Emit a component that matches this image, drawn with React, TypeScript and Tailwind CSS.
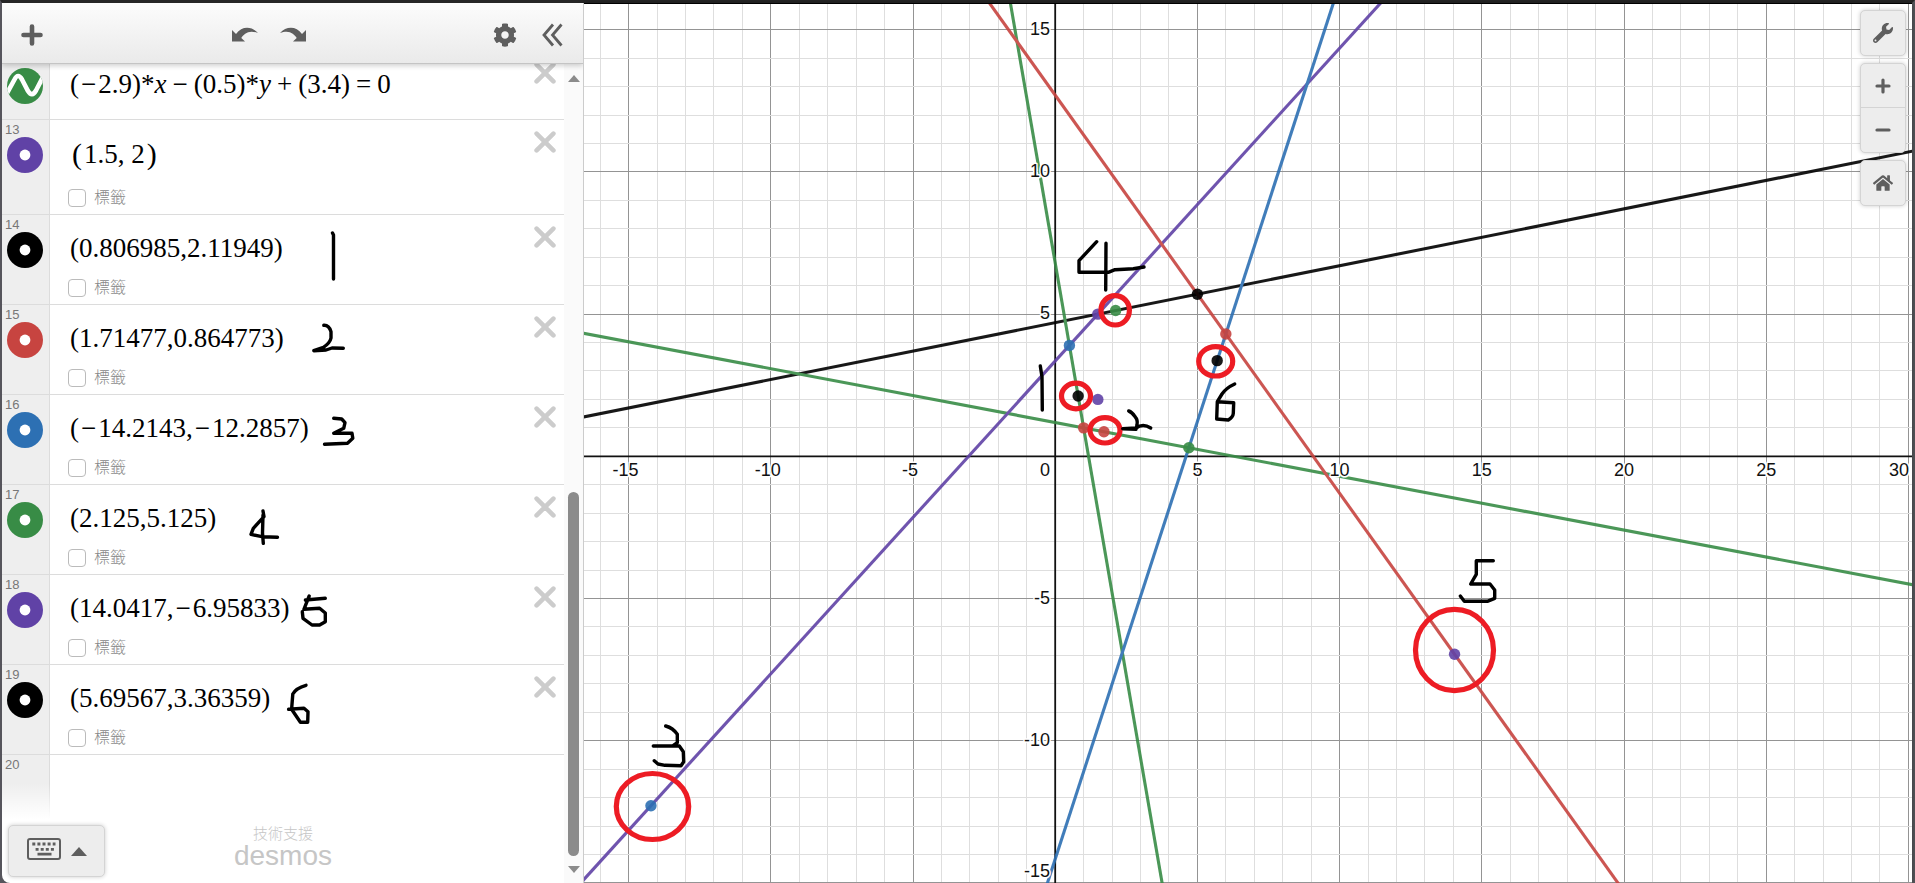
import type { ReactNode } from "react";
import { FaCog, FaHome, FaWrench } from "react-icons/fa";

const RED = "#c74440";
const BLUE = "#2d70b3";
const GREEN = "#388c46";
const PURPLE = "#6042a6";
const BLACK = "#000000";

/* ---------- Expression list ---------- */

const Minus = () => <span className="px-[2px]">−</span>;
const Op = ({ children }: { children: ReactNode }) => (
  <span className="px-[6px]">{children}</span>
);

type Point = { id: number; color: string; math: ReactNode };

const points: Point[] = [
  { id: 14, color: BLACK, math: "(0.806985,2.11949)" },
  { id: 15, color: RED, math: "(1.71477,0.864773)" },
  { id: 16, color: BLUE, math: <>(<Minus />14.2143,<Minus />12.2857)</> },
  { id: 17, color: GREEN, math: "(2.125,5.125)" },
  { id: 18, color: PURPLE, math: <>(14.0417,<Minus />6.95833)</> },
  { id: 19, color: BLACK, math: "(5.69567,3.36359)" },
];

function DeleteButton() {
  return (
    <button type="button" aria-label="Delete" className="mt-[11px] mr-2 h-[22px] w-[22px] shrink-0">
      <svg viewBox="0 0 22 22" className="h-full w-full" stroke="#cccccc" strokeWidth="4.6" strokeLinecap="round">
        <path d="M2.6 2.6 19.4 19.4M19.4 2.6 2.6 19.4" />
      </svg>
    </button>
  );
}

function PointIcon({ color }: { color: string }) {
  return (
    <svg viewBox="0 0 36 36" className="h-9 w-9">
      <circle cx="18" cy="18" r="18" fill={color} />
      <circle cx="18" cy="18" r="5.4" fill="#fff" />
    </svg>
  );
}

function CurveIcon() {
  return (
    <svg viewBox="0 0 36 36" className="h-9 w-9">
      <clipPath id="disc">
        <circle cx="18" cy="18" r="18" />
      </clipPath>
      <g clipPath="url(#disc)">
        <rect width="36" height="36" fill={GREEN} />
        <path d="M-2 29L7.500 11.500Q11 4.500 15 11.500L21 23Q25 29.500 29 22.500L38 5" fill="none" stroke="#fff" strokeWidth="4.600" />
      </g>
    </svg>
  );
}

function Gutter({ id, children }: { id?: number; children?: ReactNode }) {
  return (
    <div className="w-12 shrink-0 border-r border-[#dcdcdc] bg-[#eeeeee] pt-[2px]">
      <div className="h-[15px] pl-[3px] text-[13px] leading-[15px] text-[#777777]">{id}</div>
      {children && (
        <button type="button" aria-label="Toggle" className="ml-[5px] block h-9 w-9">
          {children}
        </button>
      )}
    </div>
  );
}

function LabelToggle({ id }: { id: number }) {
  return (
    <label htmlFor={`label-${id}`} className="-ml-[2px] flex w-fit items-center gap-2 text-base leading-[18px] font-light text-[#888888]">
      <input
        id={`label-${id}`}
        type="checkbox"
        className="h-[18px] w-[18px] appearance-none rounded-[4px] border border-[#bbbbbb] bg-white"
      />
      標籤
    </label>
  );
}

const mathClass = "font-['Liberation_Serif',serif] text-[27px] leading-8 whitespace-nowrap text-black";

function PointRow({ id, color, math }: Point) {
  return (
    <li className="flex h-[90px] border-b border-[#dcdcdc]">
      <Gutter id={id}>
        <PointIcon color={color} />
      </Gutter>
      <div className="flex flex-1 flex-col gap-[15px] pt-[17px] pl-5">
        <div className={mathClass}>{math}</div>
        <LabelToggle id={id} />
      </div>
      <DeleteButton />
    </li>
  );
}

function Header() {
  return (
    <header className="relative z-10 grid h-[61px] shrink-0 grid-cols-[214px_1fr_auto] items-center border-b border-[#c4c4c4] bg-linear-to-b from-[#fcfcfc] to-[#eaeaea] pt-[3px] pr-5 pl-4 text-[#5e5e5e] shadow-[0_2px_5px_rgba(0,0,0,0.18)]">
      <button type="button" aria-label="Add item" className="ml-[2px] justify-self-start">
        <svg viewBox="0 0 24 24" className="block h-6 w-6" stroke="currentColor" strokeWidth="4.600" strokeLinecap="round">
          <path d="M12 3.500V20.500M3.500 12H20.500" />
        </svg>
      </button>
      <div className="flex items-center gap-[22px]">
        <button type="button" aria-label="Undo">
          <svg viewBox="0 0 26 16" className="mb-[2px] block h-4 w-[26px]" fill="currentColor">
            <path d="M0 4V15.500H13L9.300 12C12 7.500 17 3.500 26 7C20 .3 10-.5 4 8Z" />
          </svg>
        </button>
        <button type="button" aria-label="Redo">
          <svg viewBox="0 0 26 16" className="mb-[2px] block h-4 w-[26px]" fill="currentColor">
            <path d="M26 4V15.500H13L16.700 12C14 7.500 9 3.500 0 7C6 .3 16-.5 22 8Z" />
          </svg>
        </button>
      </div>
      <div className="flex items-center gap-6">
        <button type="button" aria-label="Settings">
          <FaCog className="block h-6 w-6" />
        </button>
        <button type="button" aria-label="Hide list">
          <svg viewBox="0 0 22 24" className="block h-6 w-[22px]" fill="none" stroke="currentColor" strokeWidth="2.800">
            <path d="M12 1.500 3 12 12 22.500M20.500 1.500 11.500 12 20.500 22.500" />
          </svg>
        </button>
      </div>
    </header>
  );
}

function KeyboardButton() {
  return (
    <button
      type="button"
      aria-label="Keyboard"
      className="ml-[6px] flex h-[52px] w-[97px] items-center justify-center gap-[10px] justify-self-start rounded-[5px] border border-[#d4d4d4] bg-[#ededed] shadow-[0_0_4px_rgba(0,0,0,0.2)]"
    >
      <svg viewBox="0 0 34 22" className="mb-1 h-[22px] w-[34px]">
        <rect x="1" y="1" width="32" height="20" rx="2" fill="none" stroke="#5e5e5e" strokeWidth="2" />
        <path d="M5.300 6H28.500M8.600 11.300H27" stroke="#5e5e5e" strokeWidth="2.800" strokeDasharray="3 2.100" />
        <path d="M10.500 16.200H24.500" stroke="#5e5e5e" strokeWidth="2.800" />
      </svg>
      <svg viewBox="0 0 16 9" className="h-[9px] w-4" fill="#5e5e5e">
        <path d="M8 0 16 9H0Z" />
      </svg>
    </button>
  );
}

function ScrollTrack() {
  return (
    <div className="flex w-[19px] shrink-0 flex-col items-center bg-[#fafafa] pt-[11px] pb-[10px]">
      <svg viewBox="0 0 12 7" className="h-[7px] w-3" fill="#8b8b8b">
        <path d="M6 0 12 7H0Z" />
      </svg>
      <div className="flex-[53]" />
      <div className="w-[11px] flex-[47] rounded-full bg-[#8b8b8b]" />
      <svg viewBox="0 0 12 7" className="mt-[10px] h-[7px] w-3" fill="#8b8b8b">
        <path d="M0 0H12L6 7Z" />
      </svg>
    </div>
  );
}

function Sidebar() {
  return (
    <aside className="relative z-10 flex w-[582px] shrink-0 flex-col overflow-hidden rounded-bl-lg border-r border-[#cccccc] bg-white">
      <Header />
      <div className="flex min-h-0 flex-1">
        <div className="flex min-w-0 flex-1 flex-col overflow-hidden">
          <ol className="-mt-[13px] flex min-h-0 flex-1 flex-col">
            <li className="flex h-[69px] shrink-0 border-b border-[#dcdcdc]">
              <Gutter>
                <CurveIcon />
              </Gutter>
              <div className={`flex-1 pt-[17px] pl-5 ${mathClass}`}>
                (<Minus />2.9)*<i>x</i>
                <Op>−</Op>(0.5)*<i>y</i>
                <Op>+</Op>(3.4)<Op>=</Op>0
              </div>
              <DeleteButton />
            </li>
            <li className="flex h-[95px] shrink-0 border-b border-[#dcdcdc]">
              <Gutter id={13}>
                <PointIcon color={PURPLE} />
              </Gutter>
              <div className="flex flex-1 flex-col gap-[19px] pt-[18px] pl-5">
                <div className={`flex items-center gap-[2px] pl-[2px] ${mathClass}`}>
                  <span className="text-[30px]">(</span>
                  <span>1.5, 2</span>
                  <span className="text-[30px]">)</span>
                </div>
                <LabelToggle id={13} />
              </div>
              <DeleteButton />
            </li>
            {points.map((p) => (
              <PointRow key={p.id} {...p} />
            ))}
            <li className="relative flex min-h-0 flex-1">
              <Gutter id={20} />
              <div className="absolute inset-x-0 bottom-0 h-9 bg-linear-to-b from-transparent to-white" />
            </li>
          </ol>
          <footer className="grid h-16 shrink-0 grid-cols-[1fr_auto_1fr] items-center">
            <KeyboardButton />
            <div className="flex flex-col items-center pb-2 text-[#c6c6c6]">
              <span className="text-[15px] leading-[18px] font-light">技術支援</span>
              <span className="text-[28px] leading-[26px]">desmos</span>
            </div>
          </footer>
        </div>
        <ScrollTrack />
      </div>
    </aside>
  );
}

/* ---------- Graph ---------- */

const UNIT = 28.44;
const gx = (x: number) => 1055.2 + x * UNIT;
const gy = (y: number) => 456.3 - y * UNIT;
const range = (a: number, b: number) => Array.from({ length: b - a + 1 }, (_, i) => a + i);

const lines = [
  { color: BLACK, m: 0.2, b: 4.7 },
  { color: GREEN, m: -0.18919, b: 1.18919 },
  { color: GREEN, m: -5.8, b: 6.8 },
  { color: PURPLE, m: 1.1, b: 3.35 },
  { color: RED, m: -1.4, b: 12.7 },
  { color: BLUE, m: 3.07692, b: -14.16154 },
];

const dots: [number, number, string][] = [
  [5, 5.7, BLACK],
  [1.5, 5, PURPLE],
  [0.5, 3.9, BLUE],
  [6, 4.3, RED],
  [1, 1, RED],
  [4.7, 0.3, GREEN],
  [1.5, 2, PURPLE],
  [0.806985, 2.11949, BLACK],
  [1.71477, 0.864773, RED],
  [-14.2143, -12.2857, BLUE],
  [2.125, 5.125, GREEN],
  [14.0417, -6.95833, PURPLE],
  [5.69567, 3.36359, BLACK],
];

const rings = [
  [1076, 396, 14.5, 12.8],
  [1105, 430.3, 15, 12.7],
  [1115.2, 310.3, 14.2, 14.7],
  [1215.7, 361.3, 17, 14.7],
  [652.5, 806.5, 36.2, 33],
  [1454.5, 650, 39, 40.7],
];

const graphInk = [
  "M1096.700 241.700 1079 260.700V272.300H1108.300L1115 269.700 1133.300 268.700 1144 267M1106 243.300 1105.700 290",
  "M1040.300 366 1042 376.700 1042.300 410",
  "M1128.700 411Q1132 412 1135 416.700 1138 420 1137 425L1136 429.300 1122.700 428.700 1136 428Q1143 423 1150.700 428",
  "M1234.700 384Q1226 388 1222 394L1217.300 401.700 1216.700 419 1228.300 420Q1233 417 1233.300 413.300L1233.700 402.700 1217.300 401.700",
  "M665.700 726Q673 728 677.300 734.300V742.700L672.700 746H653.300H679.300L683.300 751.700 683.700 761.700 681 765.700 665 765.300 658 764 654.300 760.700",
  "M1493.300 560.700H1476.300V574.300L1470.700 584H1490L1494.700 590V598.300L1487.300 601.300H1464.300L1460.300 596",
];

const listInk = [
  "M332.500 233 333.500 235V279",
  "M323.800 325.300Q329 325 331 331.700V338Q330 343 323.400 347.300L313.800 350.700 326 350 332 348 343.300 348.300",
  "M333.700 418.300 341.700 419 345 422.700 343.700 428.300 333.700 433.300H352L352.800 438.300 347.500 443.300 324.500 444.300",
  "M263 511 264 516.700 253.300 528.300 251 534.300 262 536.700 277.500 537.300M263 515 262.500 533 263.300 543.300",
  "M309.200 596 303.900 609.300 319.600 608.300 325.300 613V621.700L319.600 625H312L303 618.300 302.300 611.700M305.400 600 325.300 598.300",
  "M306 685.300Q296 688 292.800 694L291.600 709.300 300.400 722.300H307.700L308 711.700 304 708.300 288.600 709.300",
];

function Graph() {
  return (
    <svg viewBox="584 4 1328 879" preserveAspectRatio="xMinYMin slice" className="block h-full w-full" role="img" aria-label="Graph">
      <g strokeWidth="1" shapeRendering="crispEdges">
        {range(-16, 30).map((v) => (
          <path key={`x${v}`} d={`M${gx(v)} 0V884`} stroke={v % 5 ? "#dedede" : "#949494"} />
        ))}
        {range(-15, 15).map((v) => (
          <path key={`y${v}`} d={`M584 ${gy(v)}H1912`} stroke={v % 5 ? "#dedede" : "#949494"} />
        ))}
      </g>
      <path d={`M584 ${gy(0)}H1912M${gx(0)} 0V884`} stroke="#111" strokeWidth="1.800" />

      <g opacity="0.9" strokeWidth="3.100">
        {lines.map(({ color, m, b }, i) => (
          <path key={i} d={`M${gx(-25)} ${gy(m * -25 + b)}L${gx(35)} ${gy(m * 35 + b)}`} stroke={color} />
        ))}
      </g>
      {dots.map(([x, y, color], i) => (
        <circle key={i} cx={gx(x)} cy={gy(y)} r="5.700" fill={color} opacity="0.9" />
      ))}

      <g fontSize="18" fontFamily="'Liberation Sans', sans-serif" fill="#111" stroke="#fff" strokeWidth="3" strokeLinejoin="round" paintOrder="stroke">
        {[-15, -10, -5].map((v) => (
          <text key={v} x={gx(v) - 3} y="476" textAnchor="middle">{v}</text>
        ))}
        {[5, 10, 15, 20, 25].map((v) => (
          <text key={v} x={gx(v)} y="476" textAnchor="middle">{v}</text>
        ))}
        <text x="1909" y="476" textAnchor="end">30</text>
        <text x="1050" y="476" textAnchor="end">0</text>
        {[15, 10, 5, -5, -10].map((v) => (
          <text key={v} x="1050" y={gy(v) + 5} textAnchor="end">{v}</text>
        ))}
        <text x="1050" y="877" textAnchor="end">-15</text>
      </g>

      <g fill="none" stroke="#ed1c24" strokeWidth="5.200">
        {rings.map(([cx, cy, rx, ry]) => (
          <ellipse key={cx} cx={cx} cy={cy} rx={rx} ry={ry} />
        ))}
      </g>
      <g fill="none" stroke="#000" strokeWidth="3.400" strokeLinecap="round" strokeLinejoin="round">
        {graphInk.map((d) => (
          <path key={d} d={d} />
        ))}
      </g>
    </svg>
  );
}

const toolClass = "flex h-11 w-full items-center justify-center";
const panelClass = "overflow-hidden rounded-[5px] border border-[#d4d4d4] bg-[#ededed] shadow-[0_0_4px_rgba(0,0,0,0.2)]";

function GraphTools() {
  return (
    <div className="absolute top-[6px] right-[6px] flex w-[46px] flex-col gap-[7px] text-[#5e5e5e]">
      <div className={panelClass}>
        <button type="button" aria-label="Graph settings" className={toolClass}>
          <FaWrench className="h-5 w-5" />
        </button>
      </div>
      <div className={panelClass}>
        <button type="button" aria-label="Zoom in" className={`${toolClass} border-b border-[#d4d4d4]`}>
          <svg viewBox="0 0 16 16" className="h-4 w-4" stroke="currentColor" strokeWidth="3.200" strokeLinecap="round">
            <path d="M8 2V14M2 8H14" />
          </svg>
        </button>
        <button type="button" aria-label="Zoom out" className={toolClass}>
          <svg viewBox="0 0 16 16" className="h-4 w-4" stroke="currentColor" strokeWidth="3.200" strokeLinecap="round">
            <path d="M2 8H14" />
          </svg>
        </button>
      </div>
      <div className={panelClass}>
        <button type="button" aria-label="Default view" className={toolClass}>
          <FaHome className="h-5 w-5" />
        </button>
      </div>
    </div>
  );
}

export default function App() {
  return (
    <div className="relative flex h-screen border-t-[3px] border-r-[3px] border-l-2 border-t-[#262626] border-r-[#56575b] border-l-[#56555c] bg-[#56555c] font-['Liberation_Sans','Noto_Sans_CJK_TC',sans-serif]">
      <Sidebar />
      <main className="relative min-w-0 flex-1 border-t border-black bg-white shadow-[0_0_6px_rgba(0,0,0,0.35)]">
        <Graph />
        <GraphTools />
      </main>
      <svg viewBox="2 3 582 880" className="pointer-events-none absolute top-0 left-0 z-20 h-[880px] w-[582px]" fill="none" stroke="#000" strokeWidth="3.400" strokeLinecap="round" strokeLinejoin="round">
        {listInk.map((d) => (
          <path key={d} d={d} />
        ))}
      </svg>
    </div>
  );
}
